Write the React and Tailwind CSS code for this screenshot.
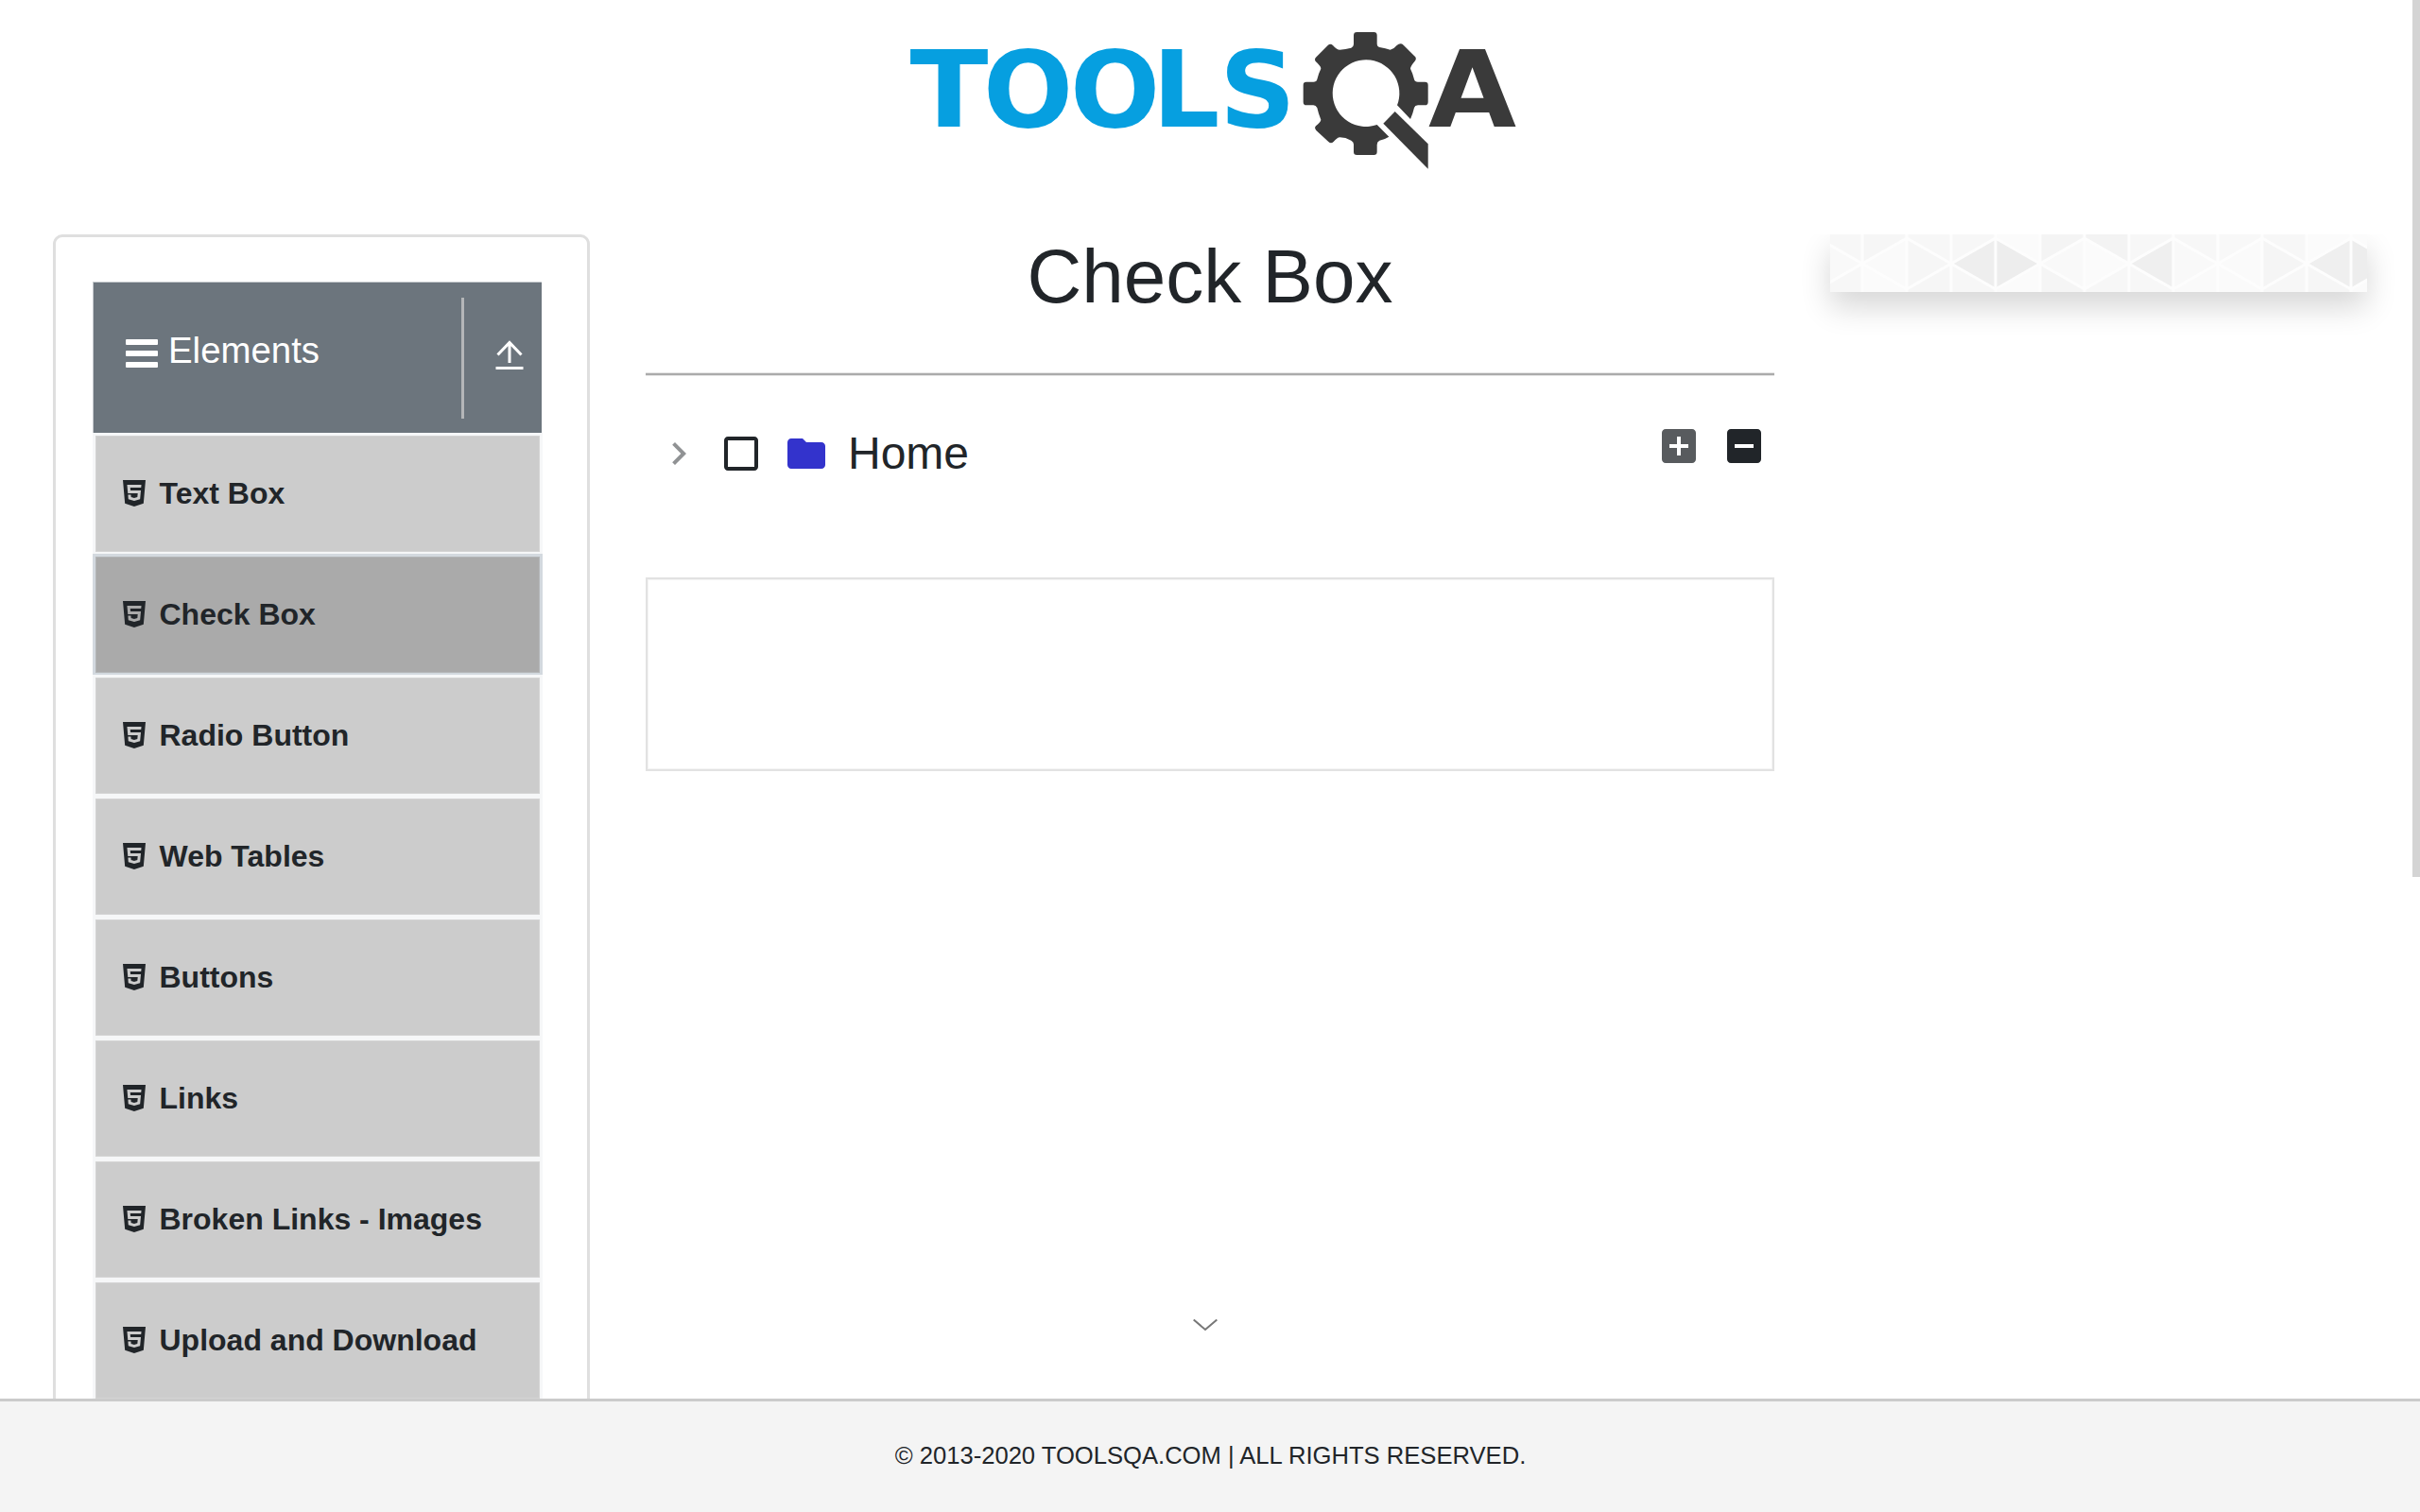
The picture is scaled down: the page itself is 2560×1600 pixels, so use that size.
const items = [
  "Text Box",
  "Check Box",
  "Radio Button",
  "Web Tables",
  "Buttons",
  "Links",
  "Broken Links - Images",
  "Upload and Download",
];

// Shades of the banner's triangles, one row per column: [middle, top, bottom]
const shades = [
  ["#f9f9f9", "#f7f7f7", "#f7f7f7"],
  ["#fafafa", "#f6f6f6", "#fbfbfb"],
  ["#f6f6f6", "#f7f7f7", "#f6f6f6"],
  ["#eeeeee", "#f7f7f7", "#f7f7f7"],
  ["#ededed", "#fbfbfb", "#fbfbfb"],
  ["#f9f9f9", "#f4f4f4", "#f5f5f5"],
  ["#fbfbfb", "#f3f3f3", "#f7f7f7"],
  ["#efefef", "#f7f7f7", "#f7f7f7"],
  ["#f9f9f9", "#f7f7f7", "#fafafa"],
  ["#fafafa", "#f8f8f8", "#fafafa"],
  ["#f5f5f5", "#f7f7f7", "#f7f7f7"],
  ["#efefef", "#fbfbfb", "#f6f6f6"],
  ["#ededed", "#fbfbfb", "#fbfbfb"],
];

function Logo() {
  return (
    <svg width="680" height="190" viewBox="0 0 680 190" className="block" aria-label="ToolsQA">
      <text y="124.300" fill="#069fe0" className="font-['DejaVu_Sans'] text-[112px] font-bold">
        <tspan x="22.500" textLength="83" lengthAdjust="spacingAndGlyphs">T</tspan>
        <tspan x="100 192 279 350">OOLS</tspan>
      </text>
      <g transform="translate(400 0) scale(0.33333)" fill="#3a3a3a">
        <path d="M268 122Q276 118 276 110L276 82Q276 72 286 72L340 72Q350 72 350 82L350 108Q350 118 358 120Q378 124 392 128Q404 126 412 115Q424 104 434 113L468 147Q478 155 470 164Q456 180 456 188Q464 204 468 222Q470 230 480 230L502 230Q512 230 512 240L512 294Q512 304 502 304L480 304Q470 305 468 312Q464 330 456 348L414 304A106 106 0 1 0 350 366L388 404Q376 412 358 416Q350 420 350 430L350 452Q350 462 340 462L286 462Q276 462 276 452L276 428Q276 420 268 416Q250 406 232 406Q224 406 212 420Q204 428 196 420L157 384Q150 376 156 370Q172 356 172 350Q164 330 160 312Q156 304 148 304L126 304Q116 304 116 294L116 240Q116 230 126 230L148 230Q158 230 160 222Q164 204 172 188Q172 180 156 166Q150 158 156 152L194 114Q202 106 210 114Q222 128 232 128Q250 126 268 122Z" />
        <path d="M407 324L512 427V506L370 362Z" />
      </g>
      <text x="571" y="124.300" fill="#3a3a3a" className="font-['DejaVu_Sans'] text-[112px] font-bold" textLength="93" lengthAdjust="spacingAndGlyphs">
        A
      </text>
    </svg>
  );
}

function Html5Icon() {
  return (
    <svg viewBox="0 0 384 512" className="h-[32px] w-[24px] shrink-0" fill="currentColor">
      <path d="M0 32l34.9 395.8L191.5 480l157.6-52.2L384 32H0zm308.2 127.9H124.4l4.1 49.4h175.6l-13.6 148.4-97.9 27v.3h-1.1l-98.7-27.3-6-75.8h47.7L138 320l53.5 14.5 53.7-14.5 6-62.2H84.3L71.5 112.2h241.1l-4.4 47.7z" />
    </svg>
  );
}

function MdIcon({ d, className }) {
  return (
    <svg viewBox="0 0 24 24" width="48" height="48" fill="currentColor" className={className}>
      <path d={d} />
    </svg>
  );
}

function Banner() {
  const w = 47;
  const columns = shades.map(([mid, top, bottom], i) => {
    const l = -13 + i * w;
    const r = l + w;
    return { mid, top, bottom, l, r, a: i % 2 === 1 ? l : r, b: i % 2 === 1 ? r : l };
  });
  return (
    <svg width="568" height="61" className="block bg-white shadow-[0_16px_32px_rgba(0,0,0,0.16)]">
      {columns.map((c) => (
        <g key={c.l}>
          <rect x={c.l} y="0" width={w} height="31" fill={c.top} />
          <rect x={c.l} y="31" width={w} height="30" fill={c.bottom} />
          <polygon points={`${c.a},31 ${c.b},4 ${c.b},58`} fill={c.mid} />
        </g>
      ))}
      <g stroke="#fdfdfd" strokeWidth="3" fill="none">
        {columns.map((c) => (
          <path key={c.l} d={`M${c.b} 4L${c.a} 31L${c.b} 58M${c.r} 0V61`} />
        ))}
      </g>
    </svg>
  );
}

function Sidebar() {
  return (
    <aside className="h-[1500px] w-[568px] shrink-0 rounded-[10px] border-[3px] border-[#dfdfdf] pt-[47px] pr-[47px] pl-[39px]">
      <div className="flex h-[161px] w-[475px] border border-r-0 border-[#c5c9cd] bg-[#6c757d] text-white">
        <div className="flex flex-1 items-start pt-[44px] pl-[34px]">
          <svg viewBox="0 0 34 36" className="mt-[16px] h-[36px] w-[34px]" fill="currentColor">
            <rect y="0" width="34" height="6" rx="1" />
            <rect y="12" width="34" height="6" rx="1" />
            <rect y="24" width="34" height="6" rx="1" />
          </svg>
          <span className="ml-[11px] text-[38.4px] leading-[56px]">Elements</span>
        </div>
        <div className="mt-[16px] h-[128px] w-[3px] bg-[#b4b6b8]" />
        <div className="flex w-[82px] pt-[61px] pl-[33px]">
          <svg viewBox="0 0 30 32" className="h-[32px] w-[30px]" fill="none" stroke="currentColor" strokeWidth="3">
            <path d="M0.500 29.500h29M15 24V3M2.500 15.500L15 2.500L27.500 15.500" />
          </svg>
        </div>
      </div>
      <ul className="-mt-px">
        {items.map((label, i) => (
          <li
            key={label}
            className={
              label === "Check Box"
                ? "flex h-[128px] w-[476px] items-center border-x-[3px] border-t-[3px] border-b-2 border-[#d3d9df] bg-[#aaaaaa] pb-[2px] pl-[28.5px] shadow-[inset_0_0_0_1px_#b4b6b8]"
                : i === 0
                  ? "flex h-[128px] w-[476px] items-center border-x-[3px] border-t-[3px] border-b-2 border-[#f6f7f8] border-t-[#f6f7f8] bg-[#cccccc] bg-clip-padding pb-[2px] pl-[28.5px] shadow-[inset_0_0_0_1px_#d4d4d4]"
                  : "flex h-[128px] w-[476px] items-center border-x-[3px] border-t-[3px] border-b-2 border-[#f6f7f8] bg-[#cccccc] pb-[2px] pl-[28.5px] shadow-[inset_0_0_0_1px_#d4d4d4]"
            }
          >
            <Html5Icon />
            <span className="ml-[15px] text-[32px] leading-[48px] font-bold whitespace-nowrap">{label}</span>
          </li>
        ))}
      </ul>
    </aside>
  );
}

function Main() {
  return (
    <main className="relative h-full w-[1194px] shrink-0">
      <h1 className="h-[146px] text-center text-[80px] leading-[90px]">Check Box</h1>
      <div className="h-[4px] border-y border-[#e6e6e6] bg-[#ababab]" />
      <div className="flex h-[213px] items-start pt-[50px]">
        <MdIcon className="mt-[8px] ml-[10.500px] text-[#909294]" d="M10 6L8.590 7.410 13.170 12l-4.580 4.590L10 18l6-6z" />
        <MdIcon
          className="mt-[8px] ml-[18.500px]"
          d="M19 5v14H5V5h14m0-2H5c-1.100 0-2 .9-2 2v14c0 1.100.9 2 2 2h14c1.100 0 2-.9 2-2V5c0-1.100-.9-2-2-2z"
        />
        <MdIcon
          className="mt-[8px] ml-[21px] text-[#3333cc]"
          d="M10 4H4c-1.100 0-1.990.9-1.990 2L2 18c0 1.100.9 2 2 2h16c1.100 0 2-.9 2-2V8c0-1.100-.9-2-2-2h-8l-2-2z"
        />
        <span className="ml-[20px] text-[48px] leading-[64px]">Home</span>
        <div className="flex-1" />
        <MdIcon
          className="text-[#585b5e]"
          d="M19 3H5c-1.110 0-2 .9-2 2v14c0 1.100.89 2 2 2h14c1.100 0 2-.9 2-2V5c0-1.100-.9-2-2-2zm-2 10h-4v4h-2v-4H7v-2h4V7h2v4h4v2z"
        />
        <MdIcon
          className="mr-[8px] ml-[21px]"
          d="M19 3H5c-1.110 0-2 .9-2 2v14c0 1.100.89 2 2 2h14c1.100 0 2-.9 2-2V5c0-1.100-.9-2-2-2zm-2 10H7v-2h10v2z"
        />
      </div>
      <div className="h-[205px] border-2 border-[#e2e2e2] shadow-[inset_0_0_0_1px_#f4f4f4]" />
      <svg viewBox="0 0 26 13" className="absolute top-[1148px] left-[579px] h-[13px] w-[26px]" fill="none" stroke="#777" strokeWidth="2">
        <path d="M0.700 0.500L13 11L25.300 0.500" />
      </svg>
    </main>
  );
}

export default function App() {
  return (
    <div className="relative flex h-[1600px] w-[2560px] flex-col overflow-hidden bg-white font-['Liberation_Sans',sans-serif] text-[#212529]">
      <header className="flex h-[248px] shrink-0 pt-[10px] pl-[940px]">
        <Logo />
      </header>
      <div className="flex h-[1232px] shrink-0 gap-[59px] overflow-hidden pl-[56px]">
        <Sidebar />
        <Main />
        <div className="-mt-[48px] h-[200px] pt-[48px]">
          <Banner />
        </div>
      </div>
      <footer className="flex h-[120px] items-center justify-center border-t-[3px] border-[#cbcbcb] bg-[#f4f4f4] pb-[2px] pl-px text-[25.6px]">
        © 2013-2020 TOOLSQA.COM | ALL RIGHTS RESERVED.
      </footer>
      <div className="absolute top-0 right-0 h-[928px] w-[8px] bg-[#d4d4d4]" />
    </div>
  );
}
